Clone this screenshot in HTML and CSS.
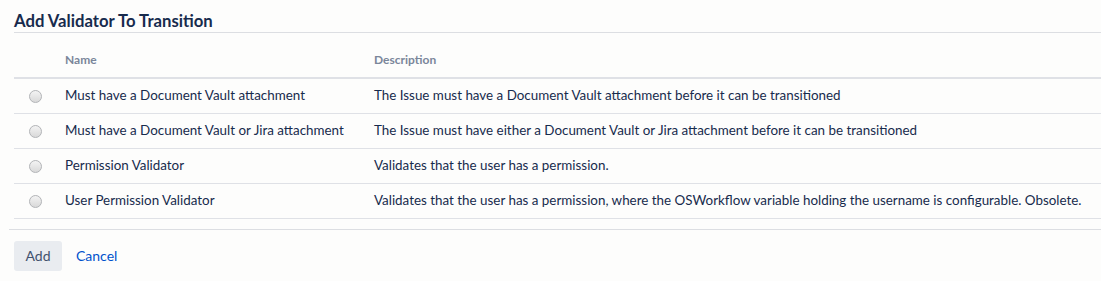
FILE: index.html
```html
<!DOCTYPE html>
<html>
<head>
<meta charset="utf-8">
<link rel="stylesheet" href="styles.css">
</head>
<body>
<div class="page">
  <h2 class="title">Add Validator To Transition</h2>
  <table class="grid">
    <colgroup>
      <col class="col-radio">
      <col class="col-name">
      <col class="col-desc">
    </colgroup>
    <thead>
      <tr>
        <th></th>
        <th>Name</th>
        <th>Description</th>
      </tr>
    </thead>
    <tbody>
      <tr>
        <td><span class="radio"></span></td>
        <td>Must have a Document Vault attachment</td>
        <td>The Issue must have a Document Vault attachment before it can be transitioned</td>
      </tr>
      <tr>
        <td><span class="radio"></span></td>
        <td>Must have a Document Vault or Jira attachment</td>
        <td>The Issue must have either a Document Vault or Jira attachment before it can be transitioned</td>
      </tr>
      <tr>
        <td><span class="radio"></span></td>
        <td>Permission Validator</td>
        <td>Validates that the user has a permission.</td>
      </tr>
      <tr>
        <td><span class="radio"></span></td>
        <td>User Permission Validator</td>
        <td>Validates that the user has a permission, where the OSWorkflow variable holding the username is configurable. Obsolete.</td>
      </tr>
    </tbody>
  </table>
  <div class="footer">
    <button class="btn">Add</button>
    <a class="link" href="#">Cancel</a>
  </div>
</div>
</body>
</html>
```

FILE: styles.css
```css
html, body {
  margin: 0;
  padding: 0;
  background: #fdfdfc;
}
body {
  font-family: Lato, "Noto Sans", sans-serif;
  color: #172b4d;
  font-size: 13.4px;
}
.page {
  padding-left: 14px;
}
.title {
  margin: 0;
  padding-top: 11px;
  height: 21px;
  font-size: 16.7px;
  font-weight: 700;
  line-height: 20px;
  color: #172b4d;
  border-bottom: 1px solid #dcdee2;
}
.grid {
  margin-top: 10px;
  width: 100%;
  border-collapse: collapse;
  table-layout: fixed;
}
.col-radio { width: 41px; }
.col-name { width: 309px; }
.grid th {
  height: 32px;
  padding: 0 10px 2px;
  text-align: left;
  font-size: 12px;
  font-weight: 700;
  color: #7a869a;
  border-bottom: 2px solid #dfe1e6;
}
.grid td {
  height: 31px;
  padding: 0 10px 3px;
  border-bottom: 1px solid #dfe1e6;
  white-space: nowrap;
}
.radio {
  display: block;
  width: 11px;
  height: 11px;
  margin: 3px 0 0 5px;
  border-radius: 50%;
  border: 1px solid #b3b5b8;
  background: linear-gradient(#f3f3f3, #d9d9d9);
}
.footer {
  margin-top: 10px;
  margin-left: -5px;
  padding: 11px 0 0 5px;
  border-top: 1px solid #dcdee2;
  display: flex;
  align-items: center;
  gap: 14px;
}
.btn {
  height: 30px;
  width: 48px;
  border: 0;
  border-radius: 3px;
  background: #e9ecf0;
  color: #42526e;
  font-family: inherit;
  font-size: 14px;
  padding: 0 0 2px;
}
.link {
  color: #0052cc;
  text-decoration: none;
  font-size: 14px;
  margin-top: -2px;
}
```
